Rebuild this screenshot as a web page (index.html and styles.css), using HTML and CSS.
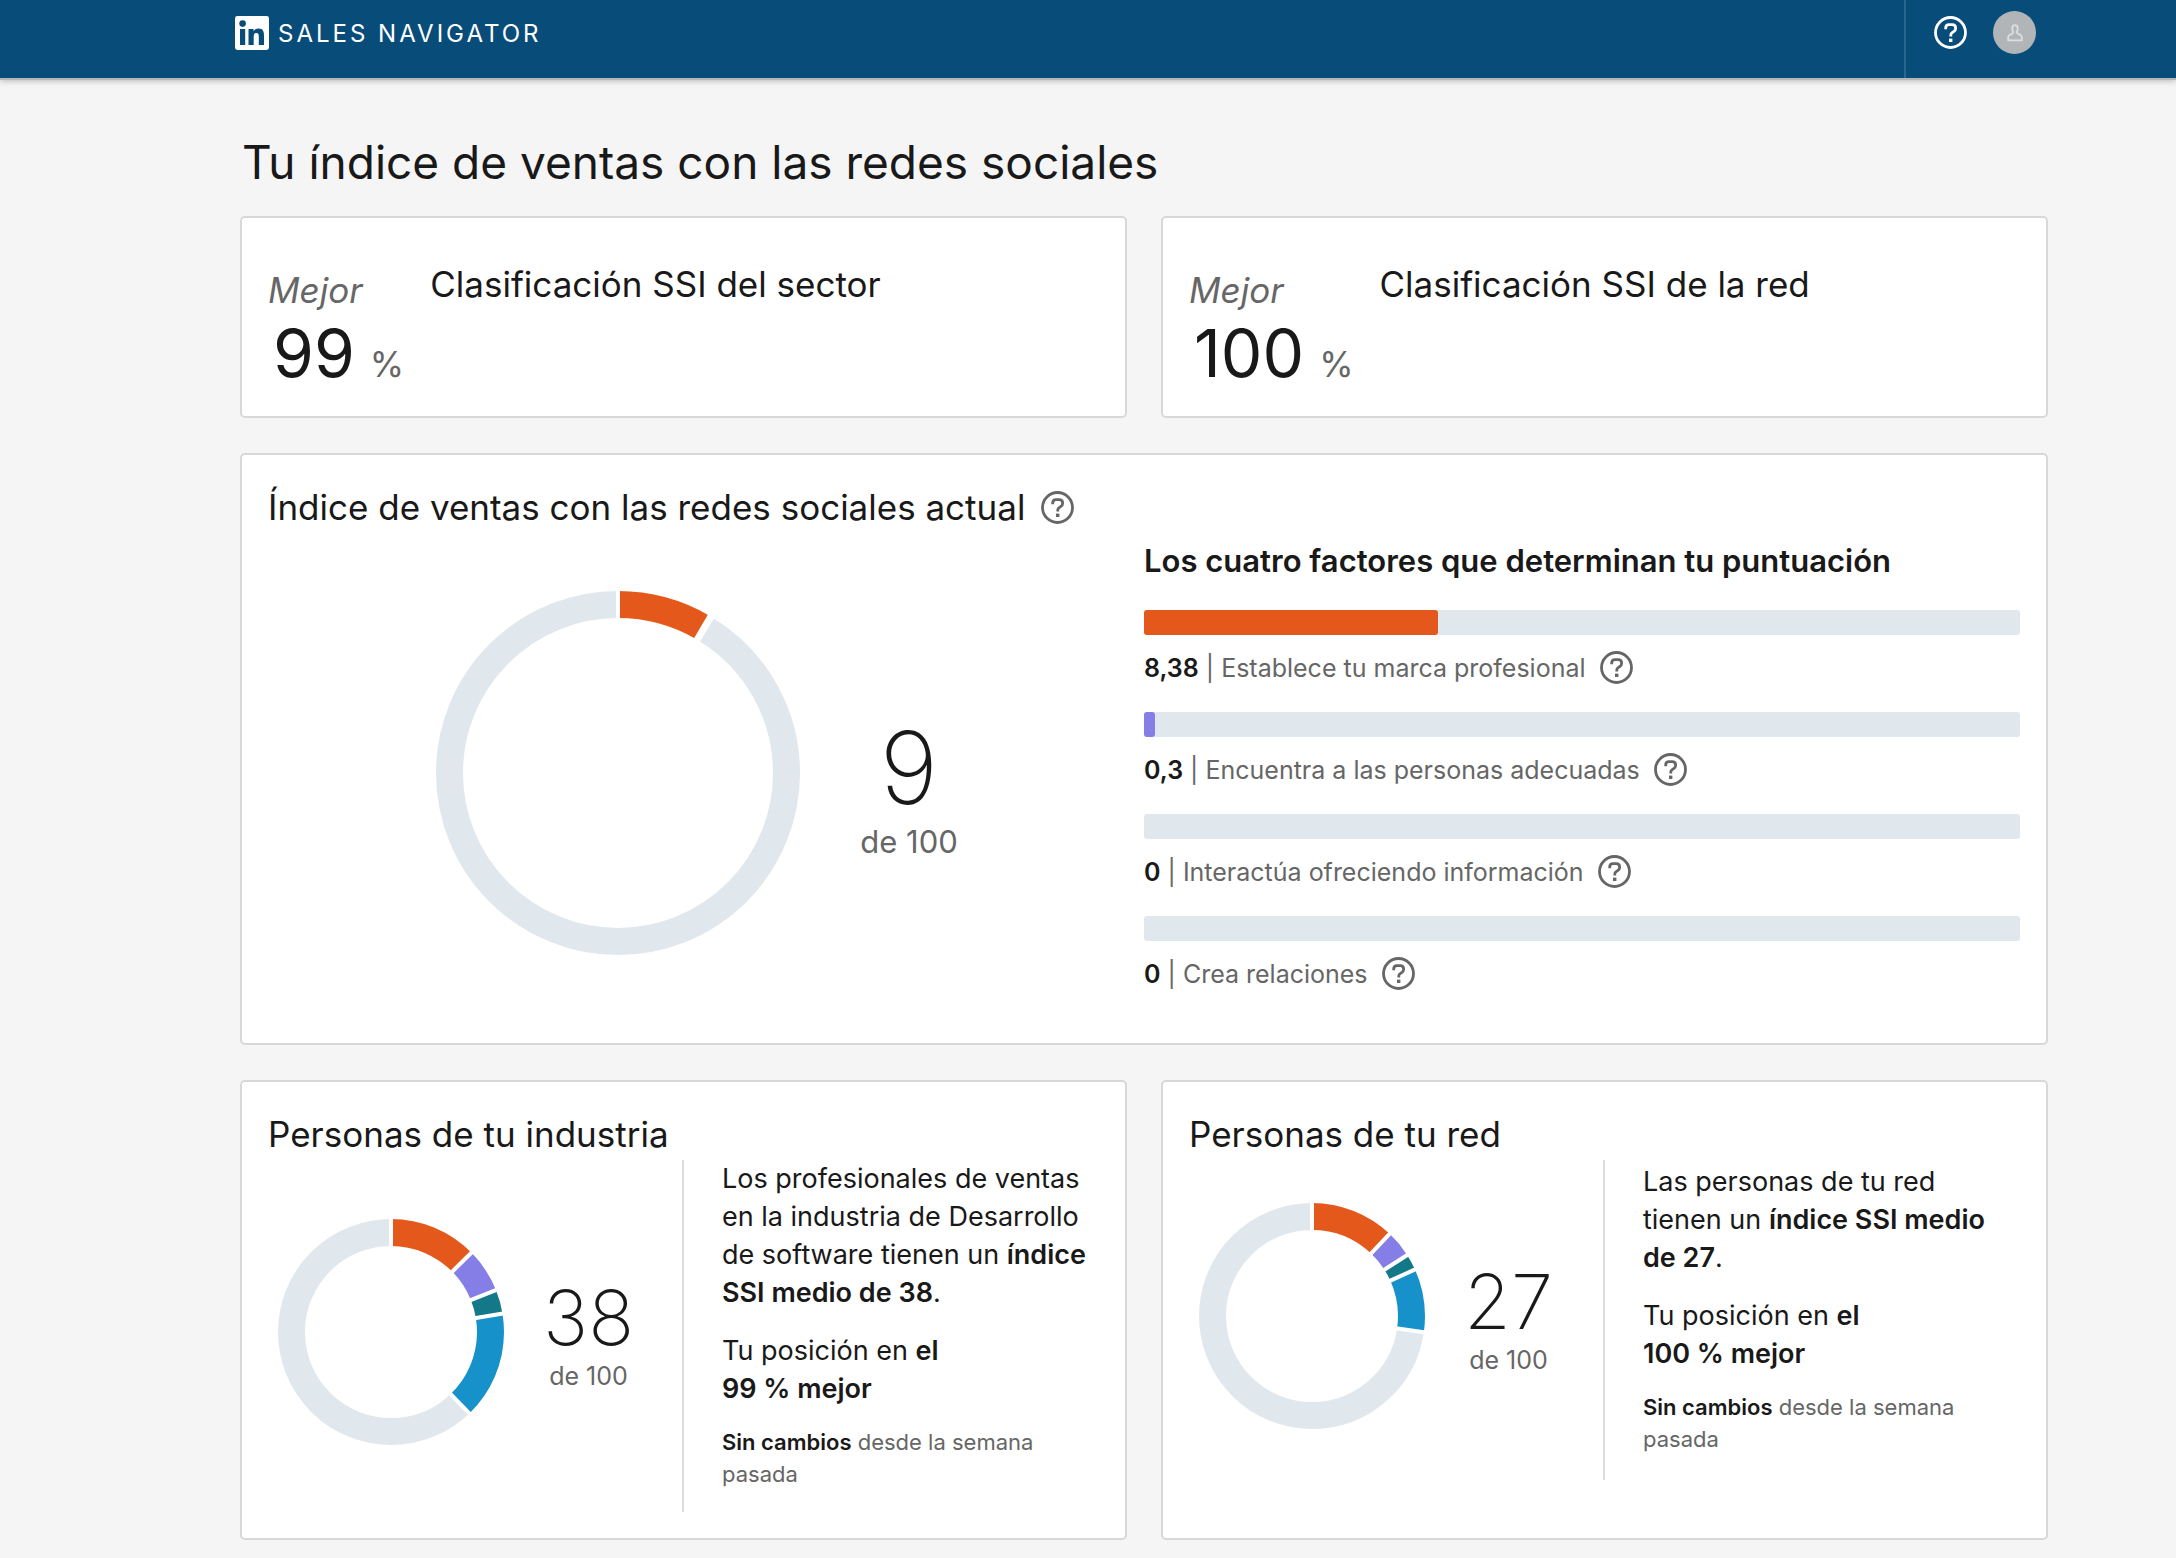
FILE: index.html
```html
<!DOCTYPE html>
<html lang="es">
<head>
<meta charset="utf-8">
<title>Sales Navigator</title>
<link rel="stylesheet" href="styles.css">
</head>
<body>
<svg class="sprite" aria-hidden="true">
  <symbol id="help" viewBox="0 0 33 33">
    <circle cx="16.5" cy="16.5" r="15" fill="none" stroke="currentColor" stroke-width="2.8"/>
    <path d="M11.7 13.2V11.9Q11.7 8.6 15 8.6H18.2Q21.6 8.6 21.6 11.8V12.6Q21.6 14.4 20 15.4L18.2 16.6Q16.8 17.5 16.8 19V20.4" fill="none" stroke="currentColor" stroke-width="2.8"/>
    <rect x="15" y="22.6" width="3.4" height="3.4" fill="currentColor"/>
  </symbol>
</svg>

<header class="topbar">
  <a class="brand" href="#">
    <svg class="brand-logo" viewBox="0 0 34 34" aria-hidden="true">
      <rect width="34" height="34" rx="2.4" fill="#fff"/>
      <circle cx="7.6" cy="7.6" r="3.3" fill="#084c7a"/>
      <path d="M5 13h5.200v16H5zM13.500 13h5v2.200c.8-1.400 2.600-2.600 5-2.600 4.400 0 5.500 2.800 5.500 6.800V29h-5.200v-8.400c0-2-.3-3.600-2.500-3.600s-2.600 1.700-2.600 3.600V29h-5.200z" fill="#084c7a"/>
    </svg>
    <span class="brand-name">SALES NAVIGATOR</span>
  </a>
  <nav class="tools">
    <button class="icon-button" type="button" aria-label="Ayuda"><svg class="icon"><use href="#help"/></svg></button>
    <button class="avatar" type="button" aria-label="Perfil">
      <svg class="avatar-icon" viewBox="0 0 16 18" aria-hidden="true"><path d="M8 1.200C6 1.200 5.200 2.600 5.200 4.600C5.200 6.400 6.200 7.400 6.200 8.600C6.200 10 1.200 10.600 1.200 13V16.300H14.800V13C14.800 10.600 9.800 10 9.800 8.600C9.800 7.400 10.800 6.400 10.800 4.600C10.800 2.600 10 1.200 8 1.200Z" fill="none" stroke="#dcdee0" stroke-width="1.800"/></svg>
    </button>
  </nav>
</header>

<main class="page">
  <h1 class="page-title">Tu índice de ventas con las redes sociales</h1>

  <div class="row">
    <section class="card rank">
      <div class="rank-score">
        <em class="rank-label">Mejor</em>
        <div class="rank-value"><span>99</span><span class="rank-unit">%</span></div>
      </div>
      <h2 class="card-title">Clasificación SSI del sector</h2>
    </section>
    <section class="card rank">
      <div class="rank-score">
        <em class="rank-label">Mejor</em>
        <div class="rank-value"><span>100</span><span class="rank-unit">%</span></div>
      </div>
      <h2 class="card-title">Clasificación SSI de la red</h2>
    </section>
  </div>

  <section class="card current">
    <div class="current-head">
      <h2 class="card-title">Índice de ventas con las redes sociales actual</h2>
      <button class="icon-button" type="button" aria-label="Más información"><svg class="icon"><use href="#help"/></svg></button>
    </div>
    <div class="current-body">
      <div class="chart">
        <svg class="donut donut-large" viewBox="-182 -182 364 364" aria-hidden="true">
          <g class="ring">
            <circle class="c-brand" r="168.5" pathLength="100" stroke-dasharray="8.38 91.62"/>
            <circle class="c-rest" r="168.5" pathLength="100" stroke-dasharray="91.32 8.68" stroke-dashoffset="-8.68"/>
          </g>
          <g class="cuts">
            <line y1="-184" y2="-152"/>
            <line y1="-184" y2="-152" transform="rotate(30.200)"/>
            <line y1="-184" y2="-152" transform="rotate(31.200)"/>
          </g>
        </svg>
        <div class="score score-large">
          <span class="score-value">9</span>
          <span class="score-total">de 100</span>
        </div>
      </div>
      <div class="factors">
        <h3 class="factors-title">Los cuatro factores que determinan tu puntuación</h3>
        <div class="factor">
          <div class="bar"><div class="bar-fill c-brand" style="width:33.520%"></div></div>
          <div class="factor-text"><span><b>8,38</b> | Establece tu marca profesional</span><button class="icon-button" type="button" aria-label="Más información"><svg class="icon"><use href="#help"/></svg></button></div>
        </div>
        <div class="factor">
          <div class="bar"><div class="bar-fill c-people" style="width:1.200%"></div></div>
          <div class="factor-text"><span><b>0,3</b> | Encuentra a las personas adecuadas</span><button class="icon-button" type="button" aria-label="Más información"><svg class="icon"><use href="#help"/></svg></button></div>
        </div>
        <div class="factor">
          <div class="bar"></div>
          <div class="factor-text"><span><b>0</b> | Interactúa ofreciendo información</span><button class="icon-button" type="button" aria-label="Más información"><svg class="icon"><use href="#help"/></svg></button></div>
        </div>
        <div class="factor">
          <div class="bar"></div>
          <div class="factor-text"><span><b>0</b> | Crea relaciones</span><button class="icon-button" type="button" aria-label="Más información"><svg class="icon"><use href="#help"/></svg></button></div>
        </div>
      </div>
    </div>
  </section>

  <div class="row">
    <section class="card people">
      <h2 class="card-title">Personas de tu industria</h2>
      <div class="people-body">
        <div class="people-chart">
          <svg class="donut donut-small" viewBox="-113 -113 226 226" aria-hidden="true">
            <g class="ring">
              <circle class="c-brand" r="99.5" pathLength="100" stroke-dasharray="12.6 87.4"/>
              <circle class="c-people" r="99.5" pathLength="100" stroke-dasharray="6.35 93.65" stroke-dashoffset="-12.6"/>
              <circle class="c-info" r="99.5" pathLength="100" stroke-dasharray="3.45 96.55" stroke-dashoffset="-18.95"/>
              <circle class="c-relations" r="99.5" pathLength="100" stroke-dasharray="15.4 84.6" stroke-dashoffset="-22.4"/>
              <circle class="c-rest" r="99.5" pathLength="100" stroke-dasharray="62.2 37.8" stroke-dashoffset="-37.8"/>
            </g>
            <g class="cuts">
              <line y1="-115" y2="-83"/>
              <line y1="-115" y2="-83" transform="rotate(45.4)"/>
              <line y1="-115" y2="-83" transform="rotate(68.2)"/>
              <line y1="-115" y2="-83" transform="rotate(80.6)"/>
              <line y1="-115" y2="-83" transform="rotate(136.1)"/>
            </g>
          </svg>
          <div class="score score-small">
            <span class="score-value">38</span>
            <span class="score-total">de 100</span>
          </div>
        </div>
        <div class="people-text">
          <p class="lead">Los profesionales de ventas en la industria de Desarrollo de software tienen un <b>índice SSI medio de 38</b>.</p>
          <p class="lead position">Tu posición en <b>el<br>99 % mejor</b></p>
          <p class="note"><b>Sin cambios</b> desde la semana pasada</p>
        </div>
      </div>
    </section>
    <section class="card people">
      <h2 class="card-title">Personas de tu red</h2>
      <div class="people-body">
        <div class="people-chart">
          <svg class="donut donut-small" viewBox="-113 -113 226 226" aria-hidden="true">
            <g class="ring">
              <circle class="c-brand" r="99.5" pathLength="100" stroke-dasharray="12.05 87.95"/>
              <circle class="c-people" r="99.5" pathLength="100" stroke-dasharray="3.9 96.1" stroke-dashoffset="-12.05"/>
              <circle class="c-info" r="99.5" pathLength="100" stroke-dasharray="2.3 97.7" stroke-dashoffset="-15.95"/>
              <circle class="c-relations" r="99.5" pathLength="100" stroke-dasharray="9.05 90.95" stroke-dashoffset="-18.25"/>
              <circle class="c-rest" r="99.5" pathLength="100" stroke-dasharray="72.7 27.3" stroke-dashoffset="-27.3"/>
            </g>
            <g class="cuts">
              <line y1="-115" y2="-83"/>
              <line y1="-115" y2="-83" transform="rotate(43.4)"/>
              <line y1="-115" y2="-83" transform="rotate(57.4)"/>
              <line y1="-115" y2="-83" transform="rotate(65.7)"/>
              <line y1="-115" y2="-83" transform="rotate(98.3)"/>
            </g>
          </svg>
          <div class="score score-small">
            <span class="score-value">27</span>
            <span class="score-total">de 100</span>
          </div>
        </div>
        <div class="people-text">
          <p class="lead">Las personas de tu red tienen un <b>índice SSI medio de 27</b>.</p>
          <p class="lead position">Tu posición en <b>el<br>100 % mejor</b></p>
          <p class="note"><b>Sin cambios</b> desde la semana pasada</p>
        </div>
      </div>
    </section>
  </div>
</main>
</body>
</html>
```
FILE: styles.css
```css
* { box-sizing: border-box; }

body {
  margin: 0;
  background: #f5f5f5;
  color: #191919;
  font-family: Inter, "Liberation Sans", sans-serif;
}

h1, h2, h3, p { margin: 0; font-weight: 400; }
b { font-weight: 600; color: #191919; }
button { padding: 0; border: 0; background: none; color: inherit; }

.sprite { display: none; }
.icon { display: block; width: 33px; height: 33px; }
.icon-button { flex: none; color: #666; }

/* Top bar */
.topbar {
  display: flex;
  justify-content: space-between;
  height: 78px;
  padding: 0 128px 0 235px;
  background: #084c7a;
  box-shadow: 0 2px 0 #b5b5b5, 0 3px 6px rgba(0, 0, 0, .25);
}
.brand {
  display: flex;
  align-items: center;
  gap: 9px;
  height: 66px;
  color: #fff;
  text-decoration: none;
}
.brand-logo { width: 34px; height: 34px; }
.brand-name { font-size: 24px; letter-spacing: 3px; }
.tools {
  display: flex;
  align-items: flex-start;
  gap: 26px;
  padding: 11px 12px 0 28px;
  border-left: 2px solid #2c6690;
}
.tools .icon-button { padding-top: 5px; color: #fff; }
.avatar {
  display: grid;
  place-items: center;
  width: 43px;
  height: 43px;
  border-radius: 50%;
  background: #b2b5b8;
}
.avatar-icon { width: 16px; height: 18px; }

/* Page */
.page {
  display: flex;
  flex-direction: column;
  gap: 35px;
  padding: 54px 128px 20px 240px;
}
.page-title {
  margin-bottom: -11px;
  padding-left: 2px;
  font-size: 46px;
  line-height: 60px;
}
.row {
  display: grid;
  grid-template-columns: 1fr 1fr;
  gap: 34px;
}
.card {
  padding: 26px;
  border: 2px solid #d8d8d8;
  border-radius: 5px;
  background: #fff;
}
.card-title { font-size: 35px; line-height: 44px; }

/* Rankings */
.rank {
  display: flex;
  gap: 26px;
  padding: 44px 26px 28px;
}
.rank-score { color: #666; }
.rank-label { display: block; font-size: 35px; line-height: 56px; }
.rank-value {
  display: flex;
  align-items: baseline;
  gap: 15px;
  padding-left: 5px;
  color: #191919;
  font-size: 66px;
  line-height: 70px;
}
.rank-unit { color: #666; font-size: 35px; line-height: 44px; }

/* Current index */
.current { padding: 30px 26px 36px; }
.current-head { display: flex; align-items: center; gap: 16px; }
.current-body {
  display: grid;
  grid-template-columns: 1fr 1fr;
}
.chart {
  display: flex;
  align-items: center;
  justify-content: center;
  gap: 60px;
  padding: 10px 18px 0 0;
}
.donut { flex: none; overflow: visible; }
.donut-large { width: 364px; height: 364px; }
.donut-small { width: 226px; height: 226px; }
.ring { fill: none; stroke-width: 27; transform: rotate(-90deg); }
.cuts { stroke: #fff; stroke-width: 4; }
.ring .c-brand { stroke: #e4591b; }
.ring .c-people { stroke: #847ee6; }
.ring .c-info { stroke: #137888; }
.ring .c-relations { stroke: #1791c9; }
.ring .c-rest { stroke: #e1e8ed; }

.score { display: flex; flex-direction: column; align-items: center; gap: 4px; }
.score-total { color: #666; }
.score-large { padding-top: 34px; }
.score-large .score-value { font-size: 100px; font-weight: 200; line-height: 100px; }
.score-large .score-total { font-size: 31px; line-height: 40px; }
.score-small { padding-top: 6px; }
.score-small .score-value { font-size: 76px; font-weight: 200; line-height: 78px; }
.score-small .score-total { font-size: 25px; line-height: 32px; }

.factors { padding-top: 12px; }
.factors-title { font-size: 31px; font-weight: 600; line-height: 40px; margin-bottom: 29px; }
.bar { height: 25px; border-radius: 3px; background: #e1e8ed; }
.bar-fill { height: 100%; border-radius: 3px; }
.bar-fill.c-brand { background: #e4591b; }
.bar-fill.c-people { background: #847ee6; }
.factor-text {
  display: flex;
  align-items: center;
  gap: 14px;
  height: 77px;
  padding-bottom: 12px;
  color: #666;
  font-size: 25px;
}
.factor:last-child .factor-text { height: 66px; padding-bottom: 1px; }

/* People comparison */
.people { padding: 30px 26px 26px; }
.people .card-title { margin-bottom: 4px; }
.people-body {
  display: grid;
  grid-template-columns: 414px 1fr;
  align-items: start;
}
.people-chart {
  display: flex;
  align-items: center;
  gap: 39px;
  align-self: stretch;
  padding: 0 0 8px 10px;
}
.people-text {
  display: flex;
  flex-direction: column;
  justify-content: center;
  min-height: 320px;
  padding-bottom: 22px;
  padding-left: 38px;
  border-left: 2px solid #ddd;
}
.lead { font-size: 27px; line-height: 38px; }
.position { margin-top: 20px; }
.note { margin-top: 18px; color: #666; font-size: 22px; line-height: 32px; }
```
